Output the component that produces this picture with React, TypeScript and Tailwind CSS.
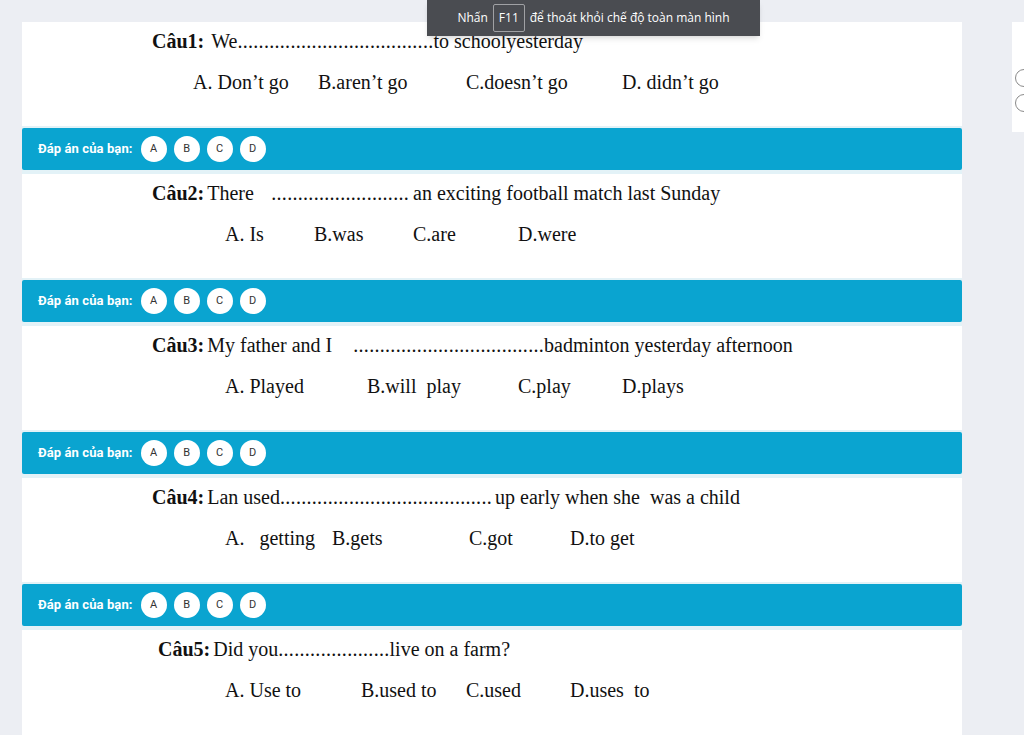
const serif = { fontFamily: '"Liberation Serif", "Times New Roman", serif' };

function Dots({ n, className = "" }: { n: number; className?: string }) {
  return <span className={"whitespace-nowrap tracking-[0.3px] " + className}>{".".repeat(n)}</span>;
}

function AnswerBar() {
  return (
    <div className="h-[42px] bg-[#0aa4d0] rounded-[2px] flex items-center pl-[16px]" style={{ fontFamily: "Roboto, Arial, sans-serif" }}>
      <span className="text-white text-[13px] font-bold tracking-[0.1px]">Đáp án của bạn:</span>
      <div className="flex gap-[7px] ml-[8px]">
        {["A", "B", "C", "D"].map((l) => (
          <span key={l} className="w-[26px] h-[26px] rounded-full bg-white flex items-center justify-center text-[11px] text-[#333]">
            {l}
          </span>
        ))}
      </div>
    </div>
  );
}

export default function App() {
  return (
    <div className="relative w-[1024px] h-[735px] overflow-hidden bg-[#eceef3]">
      <div className="flex pt-[22px]">
        {/* main column */}
        <div className="ml-[22px] w-[940px] shrink-0 flex flex-col text-[20px] text-[#111]" style={serif}>
          {/* Câu 1 */}
          <div className="h-[104px] bg-white pt-[7px]">
            <div className="flex items-baseline pl-[130px] leading-[24px] whitespace-nowrap">
              <b>Câu1:</b>
              <span className="ml-[7px]">We</span>
              <Dots n={37} />
              <span>to schoolyesterday</span>
            </div>
            <div className="flex pl-[171px] mt-[17px] leading-[24px] whitespace-nowrap">
              <span className="w-[125px]">A. Don’t go</span>
              <span className="w-[148px]">B.aren’t go</span>
              <span className="w-[156px]">C.doesn’t go</span>
              <span>D. didn’t go</span>
            </div>
          </div>
          <div className="h-[2px] bg-[#e3f2f7]" />
          <AnswerBar />
          <div className="h-[4px] bg-[#e3f2f7]" />

          {/* Câu 2 */}
          <div className="h-[104px] bg-white pt-[7px]">
            <div className="flex items-baseline pl-[130px] leading-[24px] whitespace-nowrap">
              <b>Câu2:</b>
              <span className="ml-[3px] w-[64px]">There</span>
              <Dots n={26} />
              <span className="ml-[4px]">an exciting football match last Sunday</span>
            </div>
            <div className="flex pl-[203px] mt-[17px] leading-[24px] whitespace-nowrap">
              <span className="w-[89px]">A. Is</span>
              <span className="w-[99px]">B.was</span>
              <span className="w-[105px]">C.are</span>
              <span>D.were</span>
            </div>
          </div>
          <div className="h-[2px] bg-[#e3f2f7]" />
          <AnswerBar />
          <div className="h-[4px] bg-[#e3f2f7]" />

          {/* Câu 3 */}
          <div className="h-[104px] bg-white pt-[7px]">
            <div className="flex items-baseline pl-[130px] leading-[24px] whitespace-nowrap">
              <b>Câu3:</b>
              <span className="ml-[3px] w-[146px]">My father and I</span>
              <Dots n={36} />
              <span>badminton yesterday afternoon</span>
            </div>
            <div className="flex pl-[203px] mt-[17px] leading-[24px] whitespace-nowrap">
              <span className="w-[142px]">A. Played</span>
              <span className="w-[151px]">B.will&nbsp; play</span>
              <span className="w-[104px]">C.play</span>
              <span>D.plays</span>
            </div>
          </div>
          <div className="h-[2px] bg-[#e3f2f7]" />
          <AnswerBar />
          <div className="h-[4px] bg-[#e3f2f7]" />

          {/* Câu 4 */}
          <div className="h-[104px] bg-white pt-[7px]">
            <div className="flex items-baseline pl-[130px] leading-[24px] whitespace-nowrap">
              <b>Câu4:</b>
              <span className="ml-[3px]">Lan used</span>
              <Dots n={40} />
              <span className="ml-[3px]">up early when she&nbsp; was a child</span>
            </div>
            <div className="flex pl-[203px] mt-[17px] leading-[24px] whitespace-nowrap">
              <span className="w-[107px]">A.&nbsp;&nbsp; getting</span>
              <span className="w-[137px]">B.gets</span>
              <span className="w-[101px]">C.got</span>
              <span>D.to get</span>
            </div>
          </div>
          <div className="h-[2px] bg-[#e3f2f7]" />
          <AnswerBar />
          <div className="h-[4px] bg-[#e3f2f7]" />

          {/* Câu 5 */}
          <div className="h-[120px] bg-white pt-[7px]">
            <div className="flex items-baseline pl-[136px] leading-[24px] whitespace-nowrap">
              <b>Câu5:</b>
              <span className="ml-[3px]">Did you</span>
              <Dots n={21} />
              <span>live on a farm?</span>
            </div>
            <div className="flex pl-[203px] mt-[17px] leading-[24px] whitespace-nowrap">
              <span className="w-[136px]">A. Use to</span>
              <span className="w-[105px]">B.used to</span>
              <span className="w-[104px]">C.used</span>
              <span>D.uses&nbsp; to</span>
            </div>
          </div>
        </div>

        {/* right sidebar card */}
        <div className="ml-[50px] w-[200px] h-[110px] shrink-0 bg-white pt-[47px] pl-[3px] flex flex-col gap-[7px]">
          <span className="w-[18px] h-[18px] rounded-full border border-[#8a8a8a]" />
          <span className="w-[18px] h-[18px] rounded-full border border-[#8a8a8a]" />
        </div>
      </div>

      {/* fullscreen toast */}
      <div
        className="absolute top-0 left-[427px] w-[333px] h-[36px] bg-[#4a4c51] text-white text-[12px] flex items-center justify-center gap-[5px] shadow-md"
        style={{ fontFamily: '"Open Sans", "Noto Sans", sans-serif' }}
      >
        <span>Nhấn</span>
        <span className="h-[28px] px-[5px] flex items-center border border-[#a0a1a4] rounded-[2px]">F11</span>
        <span>để thoát khỏi chế độ toàn màn hình</span>
      </div>
    </div>
  );
}
